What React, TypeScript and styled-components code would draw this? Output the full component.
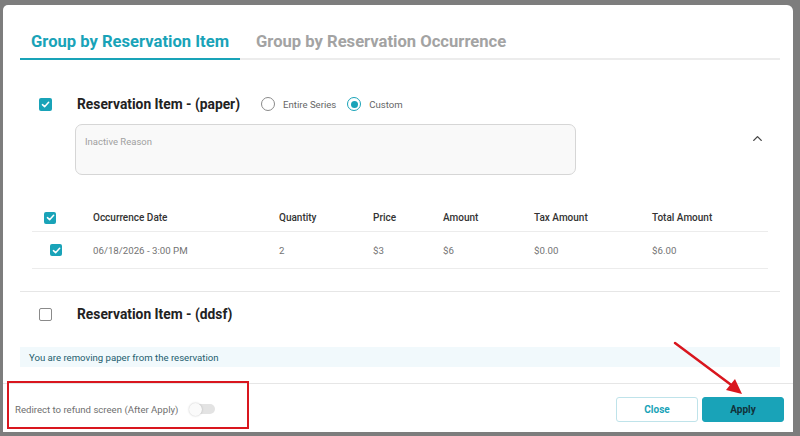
import React from "react";
import styled, { createGlobalStyle } from "styled-components";
import { ChevronUp } from "lucide-react";

const TEAL = "#19a3b8";

const Global = createGlobalStyle`
  html, body { margin: 0; padding: 0; }
  body {
    background: #7d7d7d;
    font-family: Roboto, "Liberation Sans", Arial, sans-serif;
    width: 800px;
    height: 436px;
    overflow: hidden;
  }
`;

const Screen = styled.div`
  position: relative;
  width: 800px;
  height: 436px;
  padding: 5px 7px 4px 3px;
  box-sizing: border-box;
`;

const Modal = styled.div`
  background: #fff;
  height: 427px;
  border-radius: 5px 6px 0 0;
  display: flex;
  flex-direction: column;
  box-sizing: border-box;
`;

const Body = styled.div`
  padding: 19px 13px 0 17px;
  display: flex;
  flex-direction: column;
  flex: 1;
`;

const TabBar = styled.div`
  display: flex;
  gap: 5px;
  border-bottom: 2px solid #ececec;
`;

const Tab = styled.div<{ $active?: boolean }>`
  height: 34px;
  padding: 0 11px;
  display: flex;
  align-items: center;
  font-size: 16.6px;
  font-weight: 700;
  color: ${(p) => (p.$active ? TEAL : "#a3a3a3")};
  border-bottom: 2px solid ${(p) => (p.$active ? TEAL : "transparent")};
  margin-bottom: -2px;
`;

const Section = styled.div`
  position: relative;
  padding: 0 0 0 19px;
`;

const ItemRow = styled.div<{ $top: number }>`
  display: flex;
  align-items: center;
  height: 26px;
  margin-top: ${(p) => p.$top}px;
`;

const ItemTitle = styled.div`
  font-size: 13.8px;
  font-weight: 700;
  color: #222;
  margin-left: 25px;
  margin-right: 21px;
`;

const Box = styled.span<{ $checked?: boolean; $size?: number }>`
  width: ${(p) => p.$size ?? 13}px;
  height: ${(p) => p.$size ?? 13}px;
  box-sizing: border-box;
  border-radius: 2px;
  flex: none;
  display: inline-flex;
  align-items: center;
  justify-content: center;
  background: ${(p) => (p.$checked ? TEAL : "#fff")};
  border: ${(p) => (p.$checked ? "none" : "1.5px solid #8a8a8a")};
`;

const Check = ({ checked, size }: { checked?: boolean; size?: number }) => (
  <Box $checked={checked} $size={size}>
    {checked && (
      <svg width="9" height="9" viewBox="0 0 10 10">
        <path d="M1.6 5.2 L4 7.4 L8.5 2.6" fill="none" stroke="#fff" strokeWidth="1.7" strokeLinecap="round" strokeLinejoin="round" />
      </svg>
    )}
  </Box>
);

const RadioGroup = styled.div`
  display: flex;
  align-items: center;
  gap: 11px;
`;

const RadioLabel = styled.label`
  display: flex;
  align-items: center;
  gap: 8px;
  font-size: 9.6px;
  color: #666;
`;

const RadioDot = styled.span<{ $on?: boolean }>`
  width: 14px;
  height: 14px;
  box-sizing: border-box;
  border-radius: 50%;
  border: 1.5px solid ${(p) => (p.$on ? TEAL : "#8a8a8a")};
  display: inline-flex;
  align-items: center;
  justify-content: center;
  &::after {
    content: "";
    width: 7px;
    height: 7px;
    border-radius: 50%;
    background: ${(p) => (p.$on ? TEAL : "transparent")};
  }
`;

const ReasonRow = styled.div`
  display: flex;
  align-items: center;
  justify-content: space-between;
  margin-top: 7px;
  padding-left: 36px;
  padding-right: 15px;
`;

const Reason = styled.div`
  width: 501px;
  height: 51px;
  box-sizing: border-box;
  border: 1px solid #d6d6d6;
  border-radius: 7px;
  background: #f9f9f9;
  padding: 11px 9px;
  font-size: 9.5px;
  color: #a0a0a0;
`;

const Collapse = styled.span`
  display: flex;
  color: #444;
  margin-top: -22px;
`;

const Table = styled.div`
  margin: 29px 0 0 -7px;
  width: 736px;
`;

const TRow = styled.div<{ $h: number }>`
  display: grid;
  grid-template-columns: 61px 186px 94px 70px 91px 118px 1fr;
  align-items: center;
  height: ${(p) => p.$h}px;
  border-bottom: 1px solid #ececec;
`;

const CheckCell = styled.div<{ $pad: number }>`
  display: flex;
  padding-left: ${(p) => p.$pad}px;
`;

const Th = styled.div`
  font-size: 10px;
  font-weight: 500;
  color: #333;
`;

const Td = styled.div`
  font-size: 9.7px;
  color: #737373;
`;

const Divider = styled.div`
  height: 1px;
  background: #e6e6e6;
  margin-top: 22px;
`;

const Banner = styled.div`
  margin-top: 20px;
  height: 20px;
  background: #f1f9fc;
  display: flex;
  align-items: center;
  padding-left: 9px;
  font-size: 9.6px;
  color: #245e6e;
`;

const Footer = styled.div`
  height: 46px;
  border-top: 1px solid #e6e6e6;
  display: flex;
  align-items: center;
  justify-content: space-between;
  padding: 2px 9px 0 12px;
  box-sizing: content-box;
`;

const Toggle = styled.div`
  display: flex;
  align-items: center;
  gap: 12px;
  font-size: 9.6px;
  color: #6f6f6f;
`;

const Track = styled.span`
  position: relative;
  width: 25px;
  height: 10px;
  border-radius: 5px;
  background: #e3e3e3;
  &::after {
    content: "";
    position: absolute;
    left: -1px;
    top: -1.5px;
    width: 13px;
    height: 13px;
    border-radius: 50%;
    background: #fafafa;
    box-shadow: 0 0 2px rgba(0, 0, 0, 0.25);
  }
`;

const Buttons = styled.div`
  display: flex;
  gap: 4px;
`;

const Button = styled.button<{ $primary?: boolean }>`
  width: 82px;
  height: 25px;
  border-radius: 3px;
  font-family: inherit;
  font-size: 10px;
  font-weight: 700;
  cursor: pointer;
  border: 1px solid ${(p) => (p.$primary ? TEAL : "#bfe3ea")};
  background: ${(p) => (p.$primary ? TEAL : "#fff")};
  color: ${(p) => (p.$primary ? "#11323a" : TEAL)};
`;

const Highlight = styled.div`
  position: absolute;
  left: 7px;
  top: 381px;
  width: 242px;
  height: 48px;
  box-sizing: border-box;
  border: 2.5px solid #d9161e;
  pointer-events: none;
`;

const Arrow = styled.svg`
  position: absolute;
  left: 660px;
  top: 335px;
  pointer-events: none;
`;

export default function App() {
  return (
    <>
      <Global />
      <Screen>
        <Modal>
          <Body>
            <TabBar>
              <Tab $active>Group by Reservation Item</Tab>
              <Tab>Group by Reservation Occurrence</Tab>
            </TabBar>
            <Section>
              <ItemRow $top={31}>
                <Check checked />
                <ItemTitle>Reservation Item - (paper)</ItemTitle>
                <RadioGroup>
                  <RadioLabel>
                    <RadioDot />
                    Entire Series
                  </RadioLabel>
                  <RadioLabel>
                    <RadioDot $on />
                    Custom
                  </RadioLabel>
                </RadioGroup>
              </ItemRow>
              <ReasonRow>
                <Reason>Inactive Reason</Reason>
                <Collapse>
                  <ChevronUp size={15} strokeWidth={2.2} />
                </Collapse>
              </ReasonRow>
              <Table>
                <TRow $h={27}>
                  <CheckCell $pad={12}>
                    <Check checked size={12} />
                  </CheckCell>
                  <Th>Occurrence Date</Th>
                  <Th>Quantity</Th>
                  <Th>Price</Th>
                  <Th>Amount</Th>
                  <Th>Tax Amount</Th>
                  <Th>Total Amount</Th>
                </TRow>
                <TRow $h={36}>
                  <CheckCell $pad={18}>
                    <Check checked size={12} />
                  </CheckCell>
                  <Td>06/18/2026 - 3:00 PM</Td>
                  <Td>2</Td>
                  <Td>$3</Td>
                  <Td>$6</Td>
                  <Td>$0.00</Td>
                  <Td>$6.00</Td>
                </TRow>
              </Table>
            </Section>
            <Divider />
            <Section>
              <ItemRow $top={9}>
                <Check />
                <ItemTitle>Reservation Item - (ddsf)</ItemTitle>
              </ItemRow>
            </Section>
            <Banner>You are removing paper from the reservation</Banner>
          </Body>
          <Footer>
            <Toggle>
              Redirect to refund screen (After Apply)
              <Track />
            </Toggle>
            <Buttons>
              <Button>Close</Button>
              <Button $primary>Apply</Button>
            </Buttons>
          </Footer>
        </Modal>
        <Highlight />
        <Arrow width="90" height="70" viewBox="0 0 90 70">
          <line x1="15" y1="8" x2="74" y2="52" stroke="#d9161e" strokeWidth="2.5" strokeLinecap="round" />
          <polygon points="82,59 66,55 75,44" fill="#d9161e" />
        </Arrow>
      </Screen>
    </>
  );
}
